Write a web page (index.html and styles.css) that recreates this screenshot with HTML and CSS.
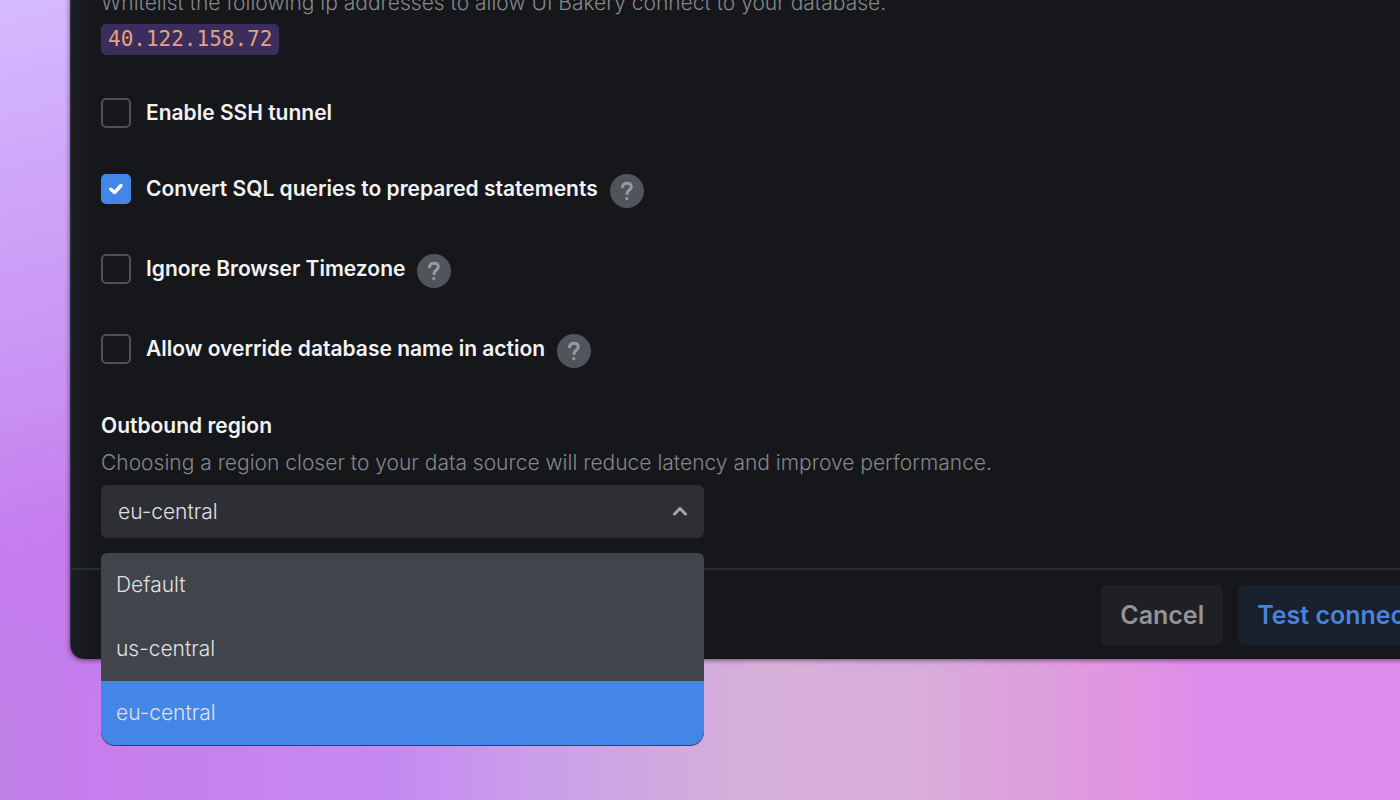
FILE: index.html
```html
<!DOCTYPE html>
<html lang="en">
<head>
  <meta charset="UTF-8" />
  <meta name="viewport" content="width=device-width, initial-scale=1.0" />
  <title>Data source settings</title>
  <link rel="stylesheet" href="styles.css">
</head>
<body>
  <form class="dialog">
    <div class="dialog-body">
      <p class="hint">Whitelist the following ip addresses to allow UI Bakery connect to your database.</p>
      <code class="ip">40.122.158.72</code>

      <div class="options">
        <div class="option">
          <input type="checkbox" id="ssh">
          <label for="ssh">Enable SSH tunnel</label>
        </div>
        <div class="option">
          <input type="checkbox" id="prepared" checked>
          <label for="prepared">Convert SQL queries to prepared statements</label>
          <button type="button" class="help" aria-label="Help">
            <svg viewBox="0 0 34 34"><path d="M12.4 12.8c.6-2.5 2.3-3.6 4.6-3.6 2.6 0 4.3 1.5 4.3 3.8 0 3.2-4.3 3.4-4.3 6.6" /><circle cx="16.8" cy="24.6" r="1.6" /></svg>
          </button>
        </div>
        <div class="option">
          <input type="checkbox" id="timezone">
          <label for="timezone">Ignore Browser Timezone</label>
          <button type="button" class="help" aria-label="Help">
            <svg viewBox="0 0 34 34"><path d="M12.4 12.8c.6-2.5 2.3-3.6 4.6-3.6 2.6 0 4.3 1.5 4.3 3.8 0 3.2-4.3 3.4-4.3 6.6" /><circle cx="16.8" cy="24.6" r="1.6" /></svg>
          </button>
        </div>
        <div class="option">
          <input type="checkbox" id="override">
          <label for="override">Allow override database name in action</label>
          <button type="button" class="help" aria-label="Help">
            <svg viewBox="0 0 34 34"><path d="M12.4 12.8c.6-2.5 2.3-3.6 4.6-3.6 2.6 0 4.3 1.5 4.3 3.8 0 3.2-4.3 3.4-4.3 6.6" /><circle cx="16.8" cy="24.6" r="1.6" /></svg>
          </button>
        </div>
      </div>

      <label class="field-label" for="region">Outbound region</label>
      <p class="hint">Choosing a region closer to your data source will reduce latency and improve performance.</p>
      <div class="select">
        <select id="region">
          <option>Default</option>
          <option>us-central</option>
          <option selected>eu-central</option>
        </select>
        <svg class="chevron" viewBox="0 0 16 10"><path d="M2.5 8 8 2.5 13.5 8" /></svg>
        <ul class="menu" role="listbox" aria-label="Outbound region">
          <li role="option">Default</li>
          <li role="option">us-central</li>
          <li role="option" class="selected" aria-selected="true">eu-central</li>
        </ul>
      </div>
    </div>

    <div class="dialog-footer">
      <button type="button" class="btn">Cancel</button>
      <button type="button" class="btn btn-test">Test connection</button>
    </div>
  </form>
</body>
</html>
```
FILE: styles.css
```css
* {
  box-sizing: border-box;
}

body {
  margin: 0;
  min-height: 100vh;
  overflow: hidden;
  font-family: Inter, sans-serif;
  font-size: 21px;
  line-height: 24px;
  color: #f2f3f5;
  background:
    linear-gradient(165deg, #d5baff 0%, #cfa6f9 16%, #c993f3 33%, #c67cee 47%, #c47bec 51%, transparent 62%),
    linear-gradient(90deg, #bd80e6 0%, #c67cec 6%, #c58af2 28%, #cb9eea 38%, #d6b0d9 54%, #d9acd9 66%, #e194e2 81%, #de8ceb 86%);
}

p, ul {
  margin: 0;
  padding: 0;
}

/* the dialog runs past the top and right edges of the window */
.dialog {
  margin: -9px -92px 0 70px;
  background: linear-gradient(90deg, #1b1f23, #16171b 24px);
  border-left: 1px solid #34323f;
  border-radius: 0 0 0 14px;
  box-shadow: 0 1px 5px rgba(20, 10, 30, 0.6);
}

.dialog-body {
  display: flex;
  flex-direction: column;
  align-items: flex-start;
  padding: 0 30px 30px;
}

.hint {
  font-weight: 300;
  color: #85868a;
}

.ip {
  margin-top: 9px;
  padding: 0 7px;
  border-radius: 5px;
  background: #3b2d5e;
  color: #e5a27c;
  font-family: "DejaVu Sans Mono", monospace;
  font-size: 21px;
  line-height: 31px;
}

.options {
  display: flex;
  flex-direction: column;
  gap: 46px;
  margin: 43px 0 46px;
}

.option {
  display: flex;
  align-items: flex-start;
  font-weight: 600;
  line-height: 30px;
}

.option input {
  appearance: none;
  width: 30px;
  height: 30px;
  margin: 0 15px 0 0;
  border: 2px solid #505156;
  border-radius: 5px;
}

.option input:checked {
  border: 0;
  background: #4386e8 url("data:image/svg+xml,%3Csvg xmlns='http://www.w3.org/2000/svg' viewBox='0 0 30 30'%3E%3Cpath d='M9.8 15.2l3.8 3.3 6.4-7' fill='none' stroke='white' stroke-width='3.4' stroke-linecap='round' stroke-linejoin='round'/%3E%3C/svg%3E");
}

.help {
  width: 34px;
  height: 34px;
  margin-left: 12px;
  padding: 0;
  border: 0;
  border-radius: 50%;
  background: #51545b;
}

.help svg {
  display: block;
}

.help path {
  fill: none;
  stroke: #9699a2;
  stroke-width: 3;
  stroke-linecap: round;
}

.help circle {
  fill: #9699a2;
}

.field-label {
  margin-bottom: 13px;
  font-weight: 600;
}

.select {
  position: relative;
  width: 603px;
  margin-top: 10px;
}

.select select {
  appearance: none;
  display: block;
  width: 100%;
  height: 53px;
  padding: 0 17px;
  border: 0;
  border-radius: 6px;
  background: #2e2e35;
  color: #e0e1e5;
  font: inherit;
  font-weight: 300;
}

.chevron {
  position: absolute;
  top: 21px;
  right: 16px;
  width: 16px;
  fill: none;
  stroke: #a3a4a9;
  stroke-width: 3;
  stroke-linecap: round;
}

.menu {
  position: absolute;
  top: 68px;
  left: 0;
  right: 0;
  overflow: hidden;
  list-style: none;
  border-radius: 6px 6px 14px 14px;
  background: #41444b;
  box-shadow: 0 1px 0 #2b3f6e;
  color: #e0e1e5;
  font-weight: 300;
  line-height: 64px;
}

.menu li {
  padding: 0 15px;
}

.menu .selected {
  background: #4386e8;
}

.dialog-footer {
  display: flex;
  justify-content: flex-end;
  gap: 15px;
  padding: 15px 22px 14px;
  border-top: 2px solid #2b2c31;
}

.btn {
  padding: 0 19px;
  border: 0;
  border-radius: 6px;
  background: #1f2025;
  color: #929397;
  font: inherit;
  font-size: 25px;
  font-weight: 600;
  line-height: 60px;
}

.btn-test {
  background: #18202d;
  color: #4a82d9;
}
```
